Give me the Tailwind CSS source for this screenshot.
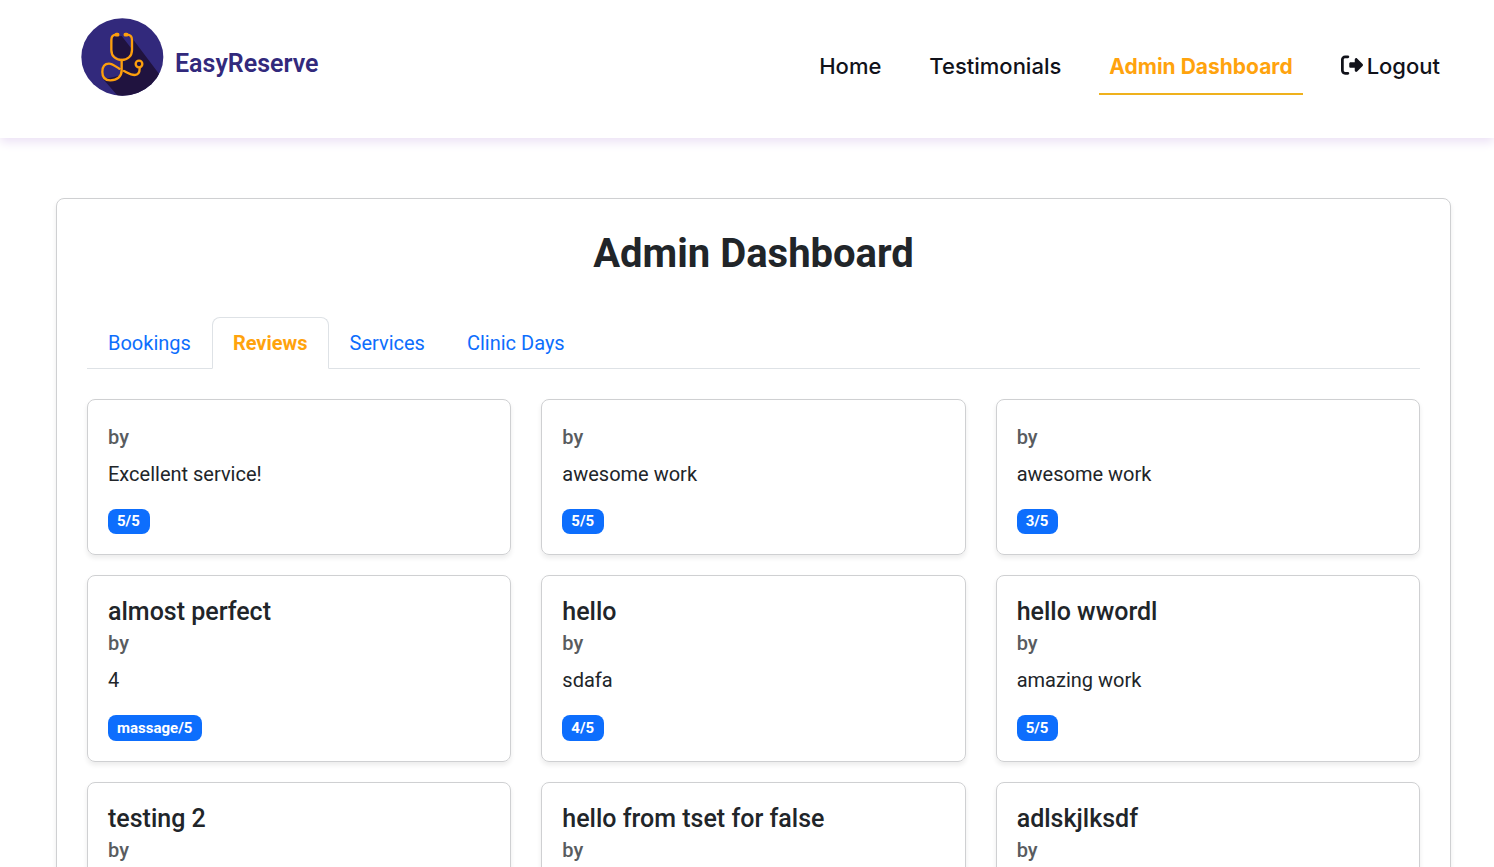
<!DOCTYPE html>
<html lang="en">
<head>
<meta charset="utf-8">
<meta name="viewport" content="width=device-width, initial-scale=1">
<title>EasyReserve</title>
<script src="https://cdn.jsdelivr.net/npm/@tailwindcss/browser@4"></script>
</head>
<body class="bg-white font-[family-name:Roboto,sans-serif] text-xl leading-[30px] text-[#212529]">
<header class="flex h-[138px] items-start justify-between pr-11 pl-[81px] shadow-[0_4px_10px_#ebe0f5]">
  <a href="#" class="flex items-center gap-[11px] pt-[18px] text-[25px] font-semibold text-[#32297c]">
    <svg class="h-[78px] w-[83px]" viewBox="33 24 249 234" aria-hidden="true">
      <defs><clipPath id="disc"><ellipse cx="157" cy="141" rx="123" ry="116"/></clipPath></defs>
      <ellipse cx="157" cy="141" rx="123" ry="116" fill="#32297c"/>
      <g clip-path="url(#disc)">
        <path fill="#20133f" d="M128 80L155 78L186 118V84L290 222L180 300L100 208L155 196V150L124 130Z"/>
      </g>
      <g fill="none" stroke="#fd9f0d" stroke-width="7" stroke-linecap="round">
        <path d="M143 74H139C130 74 124 80 124 90V120C124 138 137 150 155 150S186 138 186 120V90C186 80 180 74 171 74H166"/>
        <path stroke-width="11" d="M139 74H143M166 74H170"/>
        <path d="M155 150V181C155 199 142 211 121 211C106 211 97 202 97 186C97 170 105 161 117 161C127 161 136 169 148 176M162 183C174 189 182 195 194 195C204 195 209 188 209 175"/>
        <circle cx="207" cy="162" r="10"/>
      </g>
    </svg>
    <span class="pt-3.5">EasyReserve</span>
  </a>
  <nav class="flex gap-7 pt-10 font-[family-name:Inter,sans-serif] text-[22px] leading-[32px] font-medium text-[#11121a]">
    <a href="#" class="px-2.5 pt-[10px] pb-[11px]">Home</a>
    <a href="#" class="px-2.5 pt-[10px] pb-[11px]">Testimonials</a>
    <a href="#" class="border-b-2 border-[#efb11d] px-2.5 pt-[11px] pb-[10px] text-[21px] font-bold text-[#ffa30d]">Admin Dashboard</a>
    <a href="#" class="flex gap-1 px-2.5 pt-[10px] pb-[11px]">
      <svg class="mt-1 h-[22px] w-[22px]" viewBox="0 0 512 512" fill="currentColor" aria-hidden="true"><path d="M502.600 278.600c12.500-12.500 12.500-32.800 0-45.300l-128-128c-9.200-9.200-22.900-11.900-34.900-6.900S320 115.100 320 128l0 64-96 0c-17.700 0-32 14.300-32 32l0 64c0 17.700 14.300 32 32 32l96 0 0 64c0 12.900 7.800 24.600 19.800 29.600s25.700 2.200 34.900-6.900l128-128zM160 96c17.700 0 32-14.300 32-32s-14.300-32-32-32L96 32C43 32 0 75 0 128L0 384c0 53 43 96 96 96l64 0c17.700 0 32-14.300 32-32s-14.300-32-32-32l-64 0c-17.700 0-32-14.300-32-32l0-256c0-17.700 14.300-32 32-32l64 0z"/></svg>
      Logout</a>
  </nav>
</header>

<main class="mt-[60px] mr-[43px] ml-14 rounded-lg border border-[#cfd0d2] px-[30px] pt-[30px] pb-[30px] shadow-[0_3px_5px_rgba(0,0,0,0.08)]">
  <h1 class="text-center text-[40px] leading-[50px] font-bold">Admin Dashboard</h1>
  <div role="tablist" class="mt-[38px] flex border-b border-[#dee2e6] text-[#0d6efd]">
    <button role="tab" class="-mb-px border border-transparent px-5 py-2.5">Bookings</button>
    <button role="tab" aria-selected="true" class="-mb-px rounded-t-lg border border-[#dee2e6] border-b-white bg-white px-5 py-2.5 font-bold text-[#ffa30d]">Reviews</button>
    <button role="tab" class="-mb-px border border-transparent px-5 py-2.5">Services</button>
    <button role="tab" class="-mb-px border border-transparent px-5 py-2.5">Clinic Days</button>
  </div>

  <div class="mt-[30px] grid grid-cols-3 gap-x-[30px] gap-y-5">
    <article class="rounded-lg border border-[#cfd0d2] p-5 shadow-[0_3px_5px_rgba(0,0,0,0.08)]">
      <h6 class="mt-[5px] leading-6 font-medium text-[#595c5f]">by</h6>
      <p class="mt-2.5">Excellent service!</p>
      <span class="mt-5 block w-fit rounded-lg bg-[#0d6efd] pr-2.5 pl-[9px] py-[5px] text-[15px] leading-[15px] font-bold text-white">5/5</span>
    </article>
    <article class="rounded-lg border border-[#cfd0d2] p-5 shadow-[0_3px_5px_rgba(0,0,0,0.08)]">
      <h6 class="mt-[5px] leading-6 font-medium text-[#595c5f]">by</h6>
      <p class="mt-2.5">awesome work</p>
      <span class="mt-5 block w-fit rounded-lg bg-[#0d6efd] pr-2.5 pl-[9px] py-[5px] text-[15px] leading-[15px] font-bold text-white">5/5</span>
    </article>
    <article class="rounded-lg border border-[#cfd0d2] p-5 shadow-[0_3px_5px_rgba(0,0,0,0.08)]">
      <h6 class="mt-[5px] leading-6 font-medium text-[#595c5f]">by</h6>
      <p class="mt-2.5">awesome work</p>
      <span class="mt-5 block w-fit rounded-lg bg-[#0d6efd] pr-2.5 pl-[9px] py-[5px] text-[15px] leading-[15px] font-bold text-white">3/5</span>
    </article>
    <article class="rounded-lg border border-[#cfd0d2] p-5 shadow-[0_3px_5px_rgba(0,0,0,0.08)]">
      <h5 class="text-[25px] leading-[31px] font-medium">almost perfect</h5>
      <h6 class="mt-1 leading-6 font-medium text-[#595c5f]">by</h6>
      <p class="mt-2.5">4</p>
      <span class="mt-5 block w-fit rounded-lg bg-[#0d6efd] pr-2.5 pl-[9px] py-[5px] text-[15px] leading-4 font-bold text-white">massage/5</span>
    </article>
    <article class="rounded-lg border border-[#cfd0d2] p-5 shadow-[0_3px_5px_rgba(0,0,0,0.08)]">
      <h5 class="text-[25px] leading-[31px] font-medium">hello</h5>
      <h6 class="mt-1 leading-6 font-medium text-[#595c5f]">by</h6>
      <p class="mt-2.5">sdafa</p>
      <span class="mt-5 block w-fit rounded-lg bg-[#0d6efd] pr-2.5 pl-[9px] py-[5px] text-[15px] leading-4 font-bold text-white">4/5</span>
    </article>
    <article class="rounded-lg border border-[#cfd0d2] p-5 shadow-[0_3px_5px_rgba(0,0,0,0.08)]">
      <h5 class="text-[25px] leading-[31px] font-medium">hello wwordl</h5>
      <h6 class="mt-1 leading-6 font-medium text-[#595c5f]">by</h6>
      <p class="mt-2.5">amazing work</p>
      <span class="mt-5 block w-fit rounded-lg bg-[#0d6efd] pr-2.5 pl-[9px] py-[5px] text-[15px] leading-4 font-bold text-white">5/5</span>
    </article>
    <article class="rounded-lg border border-[#cfd0d2] p-5 shadow-[0_3px_5px_rgba(0,0,0,0.08)]">
      <h5 class="text-[25px] leading-[31px] font-medium">testing 2</h5>
      <h6 class="mt-1 leading-6 font-medium text-[#595c5f]">by</h6>
    </article>
    <article class="rounded-lg border border-[#cfd0d2] p-5 shadow-[0_3px_5px_rgba(0,0,0,0.08)]">
      <h5 class="text-[25px] leading-[31px] font-medium">hello from tset for false</h5>
      <h6 class="mt-1 leading-6 font-medium text-[#595c5f]">by</h6>
    </article>
    <article class="rounded-lg border border-[#cfd0d2] p-5 shadow-[0_3px_5px_rgba(0,0,0,0.08)]">
      <h5 class="text-[25px] leading-[31px] font-medium">adlskjlksdf</h5>
      <h6 class="mt-1 leading-6 font-medium text-[#595c5f]">by</h6>
    </article>
  </div>
</main>
</body>
</html>
